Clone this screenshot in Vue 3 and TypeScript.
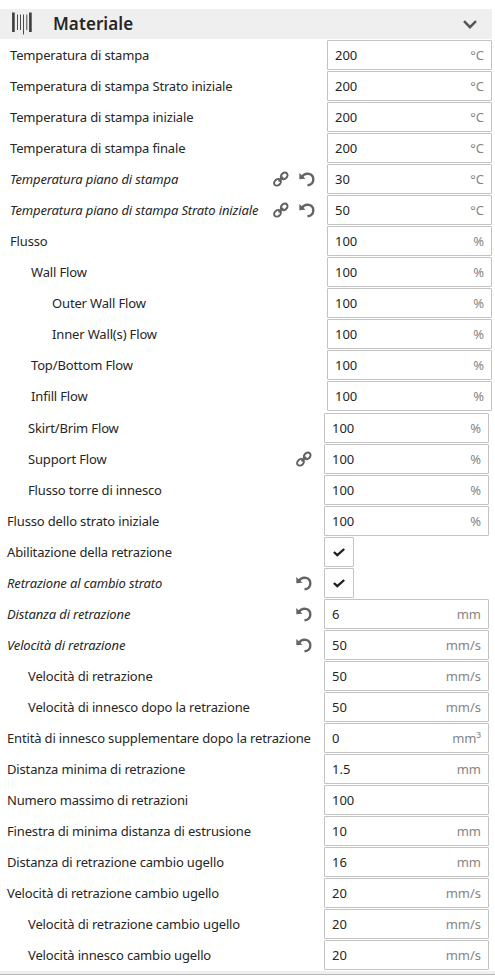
<script setup lang="ts">
interface Setting {
  label: string
  value?: string
  unit?: string
  depth?: number
  changed?: boolean
  linked?: boolean
  checked?: boolean
}

const upper: Setting[] = [
  { label: 'Temperatura di stampa', value: '200', unit: '°C' },
  { label: 'Temperatura di stampa Strato iniziale', value: '200', unit: '°C' },
  { label: 'Temperatura di stampa iniziale', value: '200', unit: '°C' },
  { label: 'Temperatura di stampa finale', value: '200', unit: '°C' },
  { label: 'Temperatura piano di stampa', value: '30', unit: '°C', changed: true, linked: true },
  { label: 'Temperatura piano di stampa Strato iniziale', value: '50', unit: '°C', changed: true, linked: true },
  { label: 'Flusso', value: '100', unit: '%' },
  { label: 'Wall Flow', value: '100', unit: '%', depth: 1 },
  { label: 'Outer Wall Flow', value: '100', unit: '%', depth: 2 },
  { label: 'Inner Wall(s) Flow', value: '100', unit: '%', depth: 2 },
  { label: 'Top/Bottom Flow', value: '100', unit: '%', depth: 1 },
  { label: 'Infill Flow', value: '100', unit: '%', depth: 1 },
]

const lower: Setting[] = [
  { label: 'Skirt/Brim Flow', value: '100', unit: '%', depth: 1 },
  { label: 'Support Flow', value: '100', unit: '%', depth: 1, linked: true },
  { label: 'Flusso torre di innesco', value: '100', unit: '%', depth: 1 },
  { label: 'Flusso dello strato iniziale', value: '100', unit: '%' },
  { label: 'Abilitazione della retrazione', checked: true },
  { label: 'Retrazione al cambio strato', checked: true, changed: true },
  { label: 'Distanza di retrazione', value: '6', unit: 'mm', changed: true },
  { label: 'Velocità di retrazione', value: '50', unit: 'mm/s', changed: true },
  { label: 'Velocità di retrazione', value: '50', unit: 'mm/s', depth: 1 },
  { label: 'Velocità di innesco dopo la retrazione', value: '50', unit: 'mm/s', depth: 1 },
  { label: 'Entità di innesco supplementare dopo la retrazione', value: '0', unit: 'mm³' },
  { label: 'Distanza minima di retrazione', value: '1.5', unit: 'mm' },
  { label: 'Numero massimo di retrazioni', value: '100' },
  { label: 'Finestra di minima distanza di estrusione', value: '10', unit: 'mm' },
  { label: 'Distanza di retrazione cambio ugello', value: '16', unit: 'mm' },
  { label: 'Velocità di retrazione cambio ugello', value: '20', unit: 'mm/s' },
  { label: 'Velocità di retrazione cambio ugello', value: '20', unit: 'mm/s', depth: 1 },
  { label: 'Velocità innesco cambio ugello', value: '20', unit: 'mm/s', depth: 1 },
]

const groups = [
  { name: 'upper', rows: upper },
  { name: 'lower', rows: lower },
]
</script>

<template>
  <main class="panel">
    <header class="header">
      <svg class="material" width="20" height="23" viewBox="0 0 20 23">
        <path d="M1.4 .5v19.5M18.4 .5v19.5" stroke="#3c3c3c" stroke-width="2.6" />
        <path d="M5.5 2.5v15.5M8.5 2.5v15.5M11.5 2.5v20M14.8 2.5v15.5" stroke="#4c4c4c" stroke-width="1" />
      </svg>
      <h1 class="title">Materiale</h1>
      <svg class="chevron" width="14" height="9" viewBox="0 0 14 9">
        <path d="M1 1.2l6 6 6-6" fill="none" stroke="#555" stroke-width="2.4" />
      </svg>
    </header>

    <section v-for="group in groups" :key="group.name" class="group" :class="group.name">
      <div v-for="(row, i) in group.rows" :key="i" class="row">
        <span class="label" :class="[`depth-${row.depth ?? 0}`, { changed: row.changed }]">{{ row.label }}</span>
        <span class="icons">
          <svg v-if="row.linked" class="icon" width="16" height="16" viewBox="0 0 16 16">
            <g fill="none" stroke="#606060" stroke-width="2">
              <ellipse cx="4.5" cy="11.3" rx="3.7" ry="2.9" transform="rotate(-43 4.5 11.3)" />
              <ellipse cx="11.2" cy="4.9" rx="3.7" ry="2.9" transform="rotate(-43 11.2 4.9)" />
              <path d="M5.5 10.4l4.7-4.5" stroke-width="1.8" />
            </g>
          </svg>
          <svg v-if="row.changed" class="icon" width="16" height="16" viewBox="0 0 16 16">
            <path d="M3 5.8C6.3 1 14.3 2.1 14.3 8.4c0 3.2-2.2 5.5-5.8 5.8" fill="none" stroke="#646464" stroke-width="2.4" />
            <path d="M.3 1.9v6.4l6.2-.5z" fill="#646464" />
          </svg>
        </span>
        <span v-if="row.checked" class="check">
          <svg width="12" height="9" viewBox="0 0 12 9">
            <path d="M.9 4l3.4 3.2L11.2 1" fill="none" stroke="#202020" stroke-width="2.3" />
          </svg>
        </span>
        <span v-else class="field">
          <span>{{ row.value }}</span>
          <span class="unit">{{ row.unit }}</span>
        </span>
      </div>
    </section>
    <footer class="footer"></footer>
  </main>
</template>

<style>
body {
  background: #fff;
}
</style>

<style scoped>
.panel {
  box-sizing: border-box;
  width: 495px;
  height: 976px;
  padding-top: 9px;
  overflow: hidden;
  color: #262626;
  background: #fff;
  font: 13px/18px "Noto Sans", sans-serif;
}

.header {
  box-sizing: border-box;
  display: flex;
  align-items: center;
  width: 492px;
  height: 30px;
  padding: 0 15px 0 12px;
  background: #efefef;
}

.material {
  margin-top: -1px;
}

.title {
  margin: 0 0 0 21px;
  font-size: 17px;
  font-weight: 600;
  line-height: 24px;
  letter-spacing: 0.08px;
}

.chevron {
  margin-left: auto;
}

.group {
  display: grid;
  gap: 1px;
}

.upper {
  width: 492px;
  padding: 1px 0 0 10px;
  box-sizing: border-box;
}

.lower {
  width: 489px;
  margin-top: 2px;
  padding-left: 7px;
  box-sizing: border-box;
}

.row {
  display: grid;
  grid-template-columns: minmax(0, 1fr) auto 165px;
  align-items: center;
  height: 30px;
}

.label {
  white-space: nowrap;
  letter-spacing: -0.155px;
}

.depth-1 {
  padding-left: 21px;
}

.depth-2 {
  padding-left: 42px;
}

.changed {
  font-style: italic;
  letter-spacing: -0.13px;
}

.icons {
  display: flex;
  gap: 10px;
  padding-right: 12px;
}

.icon {
  display: block;
  margin-top: -1px;
}

.field,
.check {
  box-sizing: border-box;
  display: flex;
  align-items: center;
  height: 30px;
  border: 1px solid #c3c3c3;
  border-radius: 1px;
}

.field {
  justify-content: space-between;
  padding: 0 7px;
}

.check {
  justify-content: center;
  width: 30px;
}

.unit {
  color: #858585;
}

.footer {
  height: 3px;
  margin-top: 1px;
  border-bottom: 1px solid #b8b8b8;
  background: #efefef;
}
</style>
